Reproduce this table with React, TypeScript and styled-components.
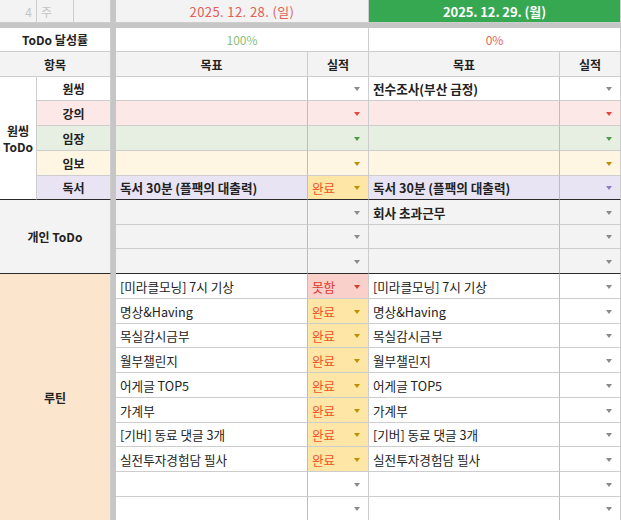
import React from 'react';
import styled, { createGlobalStyle } from 'styled-components';

const Global = createGlobalStyle`
  html, body { margin: 0; padding: 0; background: #fff; overflow: hidden; }
  body { font-family: "Noto Sans CJK KR", "Noto Sans", sans-serif; }
`;

const ROWS = [23, 5, 24, 25, 24, 25, 25, 25, 24, 25, 24, 25, 25, 25, 24, 25, 25, 25, 24, 25, 25, 24];

const Sheet = styled.div`
  display: grid;
  grid-template-columns: 37px 37px 37px 5px 192px 61px 191px 61px;
  grid-template-rows: ${ROWS.map((r) => r + 'px').join(' ')};
  width: 621px;
  font-family: "Noto Sans CJK KR", "Noto Sans", sans-serif;
`;

type CellProps = {
  $c: string;
  $r: string;
  $bg?: string;
  $bold?: boolean;
  $align?: 'left' | 'center' | 'right';
  $color?: string;
  $dark?: boolean;
};

const Cell = styled.div<CellProps>`
  grid-column: ${(p) => p.$c};
  grid-row: ${(p) => p.$r};
  background: ${(p) => p.$bg ?? '#fff'};
  border-right: 1px solid #cdcdcd;
  border-bottom: 1px solid ${(p) => (p.$dark ? '#2a2a2a' : '#cdcdcd')};
  box-sizing: border-box;
  display: flex;
  align-items: center;
  justify-content: ${(p) => (p.$align === 'left' ? 'flex-start' : p.$align === 'right' ? 'flex-end' : 'center')};
  padding: 1px 4px 0 4px;
  font-size: 12px;
  line-height: 14px;
  font-weight: ${(p) => (p.$bold ? 700 : 400)};
  color: ${(p) => p.$color ?? '#222'};
  white-space: nowrap;
  overflow: hidden;
`;

const Freeze = styled.div<{ $c: string; $r: string }>`
  grid-column: ${(p) => p.$c};
  grid-row: ${(p) => p.$r};
  background: #c6c6c6;
`;

const DateCell = styled(Cell)`
  font-size: 13px;
  letter-spacing: ${(p) => (p.$bold ? '-0.1px' : '0.4px')};
`;

const SectionLabel = styled(Cell)`
  flex-direction: column;
  text-align: center;
  line-height: 16px;
`;

const GoalCell = styled(Cell)`
  padding-left: 4px;
  font-size: 12.6px;
  border-right-color: #bdbdbd;
`;

const StatusCell = styled(Cell)`
  justify-content: space-between;
  padding: 1px 8px 0 4px;
  font-size: 12.6px;
`;

const StatusText = styled.span<{ $color: string }>`
  color: ${(p) => p.$color};
  font-weight: 400;
`;

const Arrow = styled.span<{ $color: string }>`
  flex: none;
  margin-left: auto;
  width: 0;
  height: 0;
  border-left: 3.5px solid transparent;
  border-right: 3.5px solid transparent;
  border-top: 4px solid ${(p) => p.$color};
`;

type Status = { text: string; bg: string; color: string; arrow: string } | null;

const DONE: Status = { text: '완료', bg: '#fee6a6', color: '#f0521e', arrow: '#bf9000' };
const FAIL: Status = { text: '못함', bg: '#fad0cb', color: '#e0392f', arrow: '#e0392f' };

const GRAY = '#8a8a8a';

type OneRow = { label: string; bg: string; arrow: string; g1: string; s1: Status; g2: string; a2: string };

const oneThing: OneRow[] = [
  { label: '원씽', bg: '#ffffff', arrow: GRAY, g1: '', s1: null, g2: '전수조사(부산 금정)', a2: GRAY },
  { label: '강의', bg: '#fce8e7', arrow: '#e8453c', g1: '', s1: null, g2: '', a2: '#e8453c' },
  { label: '임장', bg: '#e6efe2', arrow: '#4f9a46', g1: '', s1: null, g2: '', a2: '#4f9a46' },
  { label: '임보', bg: '#fef6e2', arrow: '#bf9000', g1: '', s1: null, g2: '', a2: '#bf9000' },
  { label: '독서', bg: '#e8e4f4', arrow: '#8e7cc3', g1: '독서 30분 (플팩의 대출력)', s1: DONE, g2: '독서 30분 (플팩의 대출력)', a2: '#8e7cc3' },
];

const personal = ['회사 초과근무', '', ''];

const routines: { goal: string; s1: Status }[] = [
  { goal: '[미라클모닝] 7시 기상', s1: FAIL },
  { goal: '명상&Having', s1: DONE },
  { goal: '목실감시금부', s1: DONE },
  { goal: '월부챌린지', s1: DONE },
  { goal: '어게글 TOP5', s1: DONE },
  { goal: '가계부', s1: DONE },
  { goal: '[기버] 동료 댓글 3개', s1: DONE },
  { goal: '실전투자경험담 필사', s1: DONE },
  { goal: '', s1: null },
  { goal: '', s1: null },
];

const r = (n: number) => `${n} / ${n + 1}`;

export default function App() {
  return (
    <>
      <Global />
      <Sheet>
        <Cell $c="1 / 2" $r={r(1)} $bg="#f3f3f3" $align="right" $color="#c4c4c4">4</Cell>
        <Cell $c="2 / 3" $r={r(1)} $bg="#f3f3f3" $align="left" $color="#c4c4c4">주</Cell>
        <Cell $c="3 / 4" $r={r(1)} $bg="#f3f3f3" />
        <DateCell $c="5 / 7" $r={r(1)} $bg="#f3f3f3" $color="#e06055">2025. 12. 28. (일)</DateCell>
        <DateCell $c="7 / 9" $r={r(1)} $bg="#36a852" $color="#ffffff" $bold>2025. 12. 29. (월)</DateCell>

        <Freeze $c="1 / -1" $r={r(2)} />
        <Freeze $c="4 / 5" $r="1 / -1" />

        <Cell $c="1 / 4" $r={r(3)} $bold>ToDo 달성률</Cell>
        <Cell $c="5 / 7" $r={r(3)} $color="#8cc07a">100%</Cell>
        <Cell $c="7 / 9" $r={r(3)} $color="#e8675c">0%</Cell>

        <Cell $c="1 / 4" $r={r(4)} $bg="#f3f3f3" $bold>항목</Cell>
        <Cell $c="5 / 6" $r={r(4)} $bg="#f3f3f3" $bold>목표</Cell>
        <Cell $c="6 / 7" $r={r(4)} $bg="#f3f3f3" $bold>실적</Cell>
        <Cell $c="7 / 8" $r={r(4)} $bg="#f3f3f3" $bold>목표</Cell>
        <Cell $c="8 / 9" $r={r(4)} $bg="#f3f3f3" $bold>실적</Cell>

        <SectionLabel $c="1 / 2" $r="5 / 10" $bold $dark>
          <span>원씽</span>
          <span>ToDo</span>
        </SectionLabel>
        {oneThing.map((row, i) => {
          const line = 5 + i;
          const dark = i === oneThing.length - 1;
          return (
            <React.Fragment key={row.label}>
              <Cell $c="2 / 4" $r={r(line)} $bg={row.bg} $bold $dark={dark}>{row.label}</Cell>
              <GoalCell $c="5 / 6" $r={r(line)} $bg={row.bg} $align="left" $bold $dark={dark}>{row.g1}</GoalCell>
              <StatusCell $c="6 / 7" $r={r(line)} $bg={row.s1 ? row.s1.bg : row.bg} $dark={dark}>
                {row.s1 && <StatusText $color={row.s1.color}>{row.s1.text}</StatusText>}
                <Arrow $color={row.s1 ? row.s1.arrow : row.arrow} />
              </StatusCell>
              <GoalCell $c="7 / 8" $r={r(line)} $bg={row.bg} $align="left" $bold $dark={dark}>{row.g2}</GoalCell>
              <StatusCell $c="8 / 9" $r={r(line)} $bg={row.bg} $dark={dark}>
                <Arrow $color={row.a2} />
              </StatusCell>
            </React.Fragment>
          );
        })}

        <Cell $c="1 / 4" $r="10 / 13" $bg="#f3f3f3" $bold $dark>개인 ToDo</Cell>
        {personal.map((g, i) => {
          const line = 10 + i;
          const dark = i === personal.length - 1;
          return (
            <React.Fragment key={'p' + i}>
              <GoalCell $c="5 / 6" $r={r(line)} $bg="#f3f3f3" $align="left" $dark={dark} />
              <StatusCell $c="6 / 7" $r={r(line)} $bg="#f3f3f3" $dark={dark}>
                <Arrow $color={GRAY} />
              </StatusCell>
              <GoalCell $c="7 / 8" $r={r(line)} $bg="#f3f3f3" $align="left" $bold $dark={dark}>{g}</GoalCell>
              <StatusCell $c="8 / 9" $r={r(line)} $bg="#f3f3f3" $dark={dark}>
                <Arrow $color={GRAY} />
              </StatusCell>
            </React.Fragment>
          );
        })}

        <Cell $c="1 / 4" $r="13 / 23" $bg="#fce5cd" $bold>루틴</Cell>
        {routines.map((row, i) => {
          const line = 13 + i;
          return (
            <React.Fragment key={'r' + i}>
              <GoalCell $c="5 / 6" $r={r(line)} $align="left">{row.goal}</GoalCell>
              <StatusCell $c="6 / 7" $r={r(line)} $bg={row.s1 ? row.s1.bg : '#fff'}>
                {row.s1 && <StatusText $color={row.s1.color}>{row.s1.text}</StatusText>}
                <Arrow $color={row.s1 ? row.s1.arrow : GRAY} />
              </StatusCell>
              <GoalCell $c="7 / 8" $r={r(line)} $align="left">{row.goal}</GoalCell>
              <StatusCell $c="8 / 9" $r={r(line)}>
                <Arrow $color={GRAY} />
              </StatusCell>
            </React.Fragment>
          );
        })}
      </Sheet>
    </>
  );
}
